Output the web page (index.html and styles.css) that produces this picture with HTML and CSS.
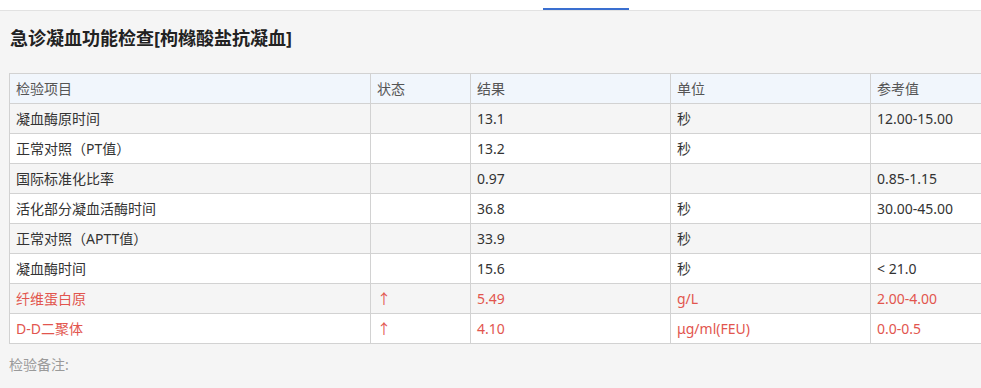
FILE: index.html
```html
<!DOCTYPE html>
<html lang="zh-CN">
<head>
    <meta charset="UTF-8">
    <title>急诊凝血功能检查</title>
    <link rel="stylesheet" href="styles.css">
</head>
<body>
    <div class="tabs">
        <div class="tab active"></div>
    </div>

    <div class="report">
        <h2 class="report-title">急诊凝血功能检查[枸橼酸盐抗凝血]</h2>

        <table class="result-table">
            <colgroup>
                <col class="c-name">
                <col class="c-state">
                <col class="c-value">
                <col class="c-unit">
                <col class="c-ref">
            </colgroup>
            <thead>
                <tr>
                    <th>检验项目</th>
                    <th>状态</th>
                    <th>结果</th>
                    <th>单位</th>
                    <th>参考值</th>
                </tr>
            </thead>
            <tbody>
                <tr>
                    <td>凝血酶原时间</td><td></td><td>13.1</td><td>秒</td><td>12.00-15.00</td>
                </tr>
                <tr>
                    <td>正常对照（PT值）</td><td></td><td>13.2</td><td>秒</td><td></td>
                </tr>
                <tr>
                    <td>国际标准化比率</td><td></td><td>0.97</td><td></td><td>0.85-1.15</td>
                </tr>
                <tr>
                    <td>活化部分凝血活酶时间</td><td></td><td>36.8</td><td>秒</td><td>30.00-45.00</td>
                </tr>
                <tr>
                    <td>正常对照（APTT值）</td><td></td><td>33.9</td><td>秒</td><td></td>
                </tr>
                <tr>
                    <td>凝血酶时间</td><td></td><td>15.6</td><td>秒</td><td>&lt; 21.0</td>
                </tr>
                <tr class="abnormal">
                    <td>纤维蛋白原</td><td>↑</td><td>5.49</td><td>g/L</td><td>2.00-4.00</td>
                </tr>
                <tr class="abnormal">
                    <td>D-D二聚体</td><td>↑</td><td>4.10</td><td>μg/ml(FEU)</td><td>0.0-0.5</td>
                </tr>
            </tbody>
        </table>

        <div class="remark">检验备注:</div>
    </div>
</body>
</html>
```

FILE: styles.css
```css
body {
    margin: 0;
    background: #f5f5f5;
    color: #333;
    font-family: "Noto Sans", "Noto Sans CJK SC", sans-serif;
    font-size: 14px;
    overflow: hidden;
}

.tabs {
    height: 10px;
    background: #fff;
    border-bottom: 1px solid #e2e2e2;
    display: flex;
}

.tab.active {
    margin-left: 543px;
    width: 86px;
    height: 8px;
    border-bottom: 2px solid #3a6fd0;
}

.report {
    padding: 0 9px;
}

.report-title {
    margin: 0;
    padding: 15px 0 0 1px;
    height: 24px;
    line-height: 24px;
    font-size: 18px;
    font-weight: bold;
    color: #222;
}

.result-table {
    margin-top: 23px;
    width: 1100px;
    border-collapse: collapse;
    table-layout: fixed;
}

.c-name { width: 361px; }
.c-state { width: 100px; }
.c-value { width: 200px; }
.c-unit { width: 200px; }
.c-ref { width: 239px; }

.result-table th,
.result-table td {
    height: 29px;
    padding: 0 6px;
    border: 1px solid #d2d2d2;
    text-align: left;
    font-weight: normal;
    line-height: 20px;
    white-space: nowrap;
}

.result-table th {
    background: #f1f6fc;
    color: #555;
}

.result-table tbody tr:nth-child(odd) td {
    background: #f5f5f5;
}

.result-table tbody tr:nth-child(even) td {
    background: #fff;
}

.result-table tr.abnormal td {
    color: #e2554e;
}

.remark {
    margin-top: 11px;
    line-height: 20px;
    color: #9a9a9a;
}
```
